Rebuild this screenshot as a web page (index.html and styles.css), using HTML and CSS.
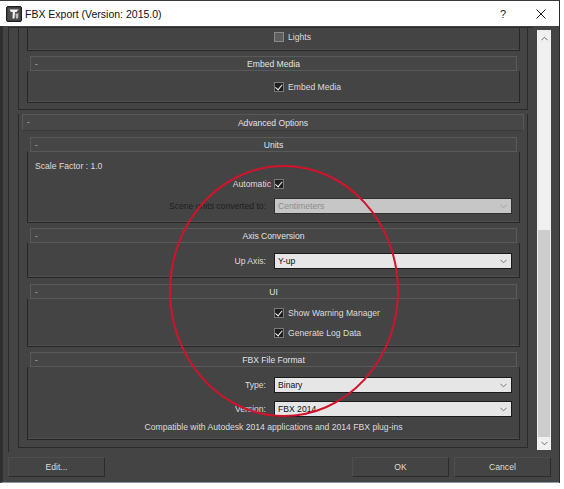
FILE: index.html
```html
<!DOCTYPE html>
<html>
<head>
<meta charset="utf-8">
<title>FBX Export</title>
<link rel="stylesheet" href="styles.css">
</head>
<body>
<div class="window">
  <div class="titlebar">
    <svg class="appicon" viewBox="0 0 16 16">
      <rect x="0.5" y="0.5" width="15" height="15" rx="1.5" fill="#3d3d3d" stroke="#1e1e1e"/>
      <rect x="2" y="2" width="12" height="12" fill="#4d4d4d"/>
      <path d="M3.5 3.5 H12.5 L10.5 6 H9 L8.5 12.5 H6.5 L6.8 6 H5 Z" fill="#f2f2f2"/>
      <path d="M9.5 7.5 L12.5 7.5 L12 12.5 L10 12.5 Z" fill="#bdbdbd"/>
    </svg>
    <span class="title">FBX Export (Version: 2015.0)</span>
    <span class="help">?</span>
    <svg class="close" viewBox="0 0 10 10"><path d="M0.5 0.5 L9.5 9.5 M9.5 0.5 L0.5 9.5" stroke="#1a1a1a" stroke-width="1" fill="none"/></svg>
  </div>
  <div class="client">
    <div class="main">
      <div class="viewport">
        <div class="rollout rollout-partial">
          <div class="sub">
            <div class="sbody lights-body">
              <div class="form">
                <span></span>
                <label class="check"><span class="cb off"></span><span class="ctext">Lights</span></label>
              </div>
            </div>
          </div>
          <div class="sub">
            <div class="shead"><span class="minus">-</span><span class="stitle">Embed Media</span></div>
            <div class="sbody embed-body">
              <div class="form">
                <span></span>
                <label class="check"><span class="cb on"></span><span class="ctext">Embed Media</span></label>
              </div>
            </div>
          </div>
        </div>

        <div class="rollout">
          <div class="rhead"><span class="minus">-</span><span class="stitle">Advanced Options</span></div>
          <div class="rcontent">
            <div class="sub">
              <div class="shead"><span class="minus">-</span><span class="stitle">Units</span></div>
              <div class="sbody units-body">
                <div class="plain">Scale Factor : 1.0</div>
                <div class="form row-auto">
                  <span class="lbl lbl-auto">Automatic</span>
                  <span class="cb on"></span>
                </div>
                <div class="form row-scene">
                  <span class="lbl lbl-dim">Scene units converted to:</span>
                  <div class="select disabled"><span>Centimeters</span><svg class="chev" viewBox="0 0 8 5"><path d="M0.5 0.5 L4 4 L7.5 0.5" fill="none" stroke="#a0a0a0"/></svg></div>
                </div>
              </div>
            </div>

            <div class="sub gap5">
              <div class="shead"><span class="minus">-</span><span class="stitle">Axis Conversion</span></div>
              <div class="sbody axis-body">
                <div class="form">
                  <span class="lbl">Up Axis:</span>
                  <div class="select"><span>Y-up</span><svg class="chev" viewBox="0 0 8 5"><path d="M0.5 0.5 L4 4 L7.5 0.5" fill="none" stroke="#6a6a6a"/></svg></div>
                </div>
              </div>
            </div>

            <div class="sub gap6">
              <div class="shead"><span class="minus">-</span><span class="stitle">UI</span></div>
              <div class="sbody ui-body">
                <div class="form">
                  <span></span>
                  <label class="check"><span class="cb on"></span><span class="ctext">Show Warning Manager</span></label>
                </div>
                <div class="form row-log">
                  <span></span>
                  <label class="check"><span class="cb on"></span><span class="ctext">Generate Log Data</span></label>
                </div>
              </div>
            </div>

            <div class="sub gap5">
              <div class="shead"><span class="minus">-</span><span class="stitle">FBX File Format</span></div>
              <div class="sbody fbx-body">
                <div class="form">
                  <span class="lbl">Type:</span>
                  <div class="select"><span>Binary</span><svg class="chev" viewBox="0 0 8 5"><path d="M0.5 0.5 L4 4 L7.5 0.5" fill="none" stroke="#6a6a6a"/></svg></div>
                </div>
                <div class="form row-version">
                  <span class="lbl">Version:</span>
                  <div class="select"><span>FBX 2014</span><svg class="chev" viewBox="0 0 8 5"><path d="M0.5 0.5 L4 4 L7.5 0.5" fill="none" stroke="#6a6a6a"/></svg></div>
                </div>
                <div class="compat">Compatible with Autodesk 2014 applications and 2014 FBX plug-ins</div>
              </div>
            </div>
          </div>
        </div>
      </div>
      <div class="scrollbar">
        <div class="sb-btn sb-up"><svg viewBox="0 0 8 5"><path d="M0.5 4.5 L4 1 L7.5 4.5" fill="none" stroke="#606060"/></svg></div>
        <div class="sb-space"></div>
        <div class="sb-thumb"></div>
        <div class="sb-btn sb-down"><svg viewBox="0 0 8 5"><path d="M0.5 0.5 L4 4 L7.5 0.5" fill="none" stroke="#606060"/></svg></div>
      </div>
    </div>
    <div class="footer">
      <button class="btn">Edit...</button>
      <span class="spacer"></span>
      <button class="btn">OK</button>
      <button class="btn">Cancel</button>
    </div>
  </div>
</div>
<svg class="annotation" viewBox="0 0 564 489">
  <ellipse cx="284" cy="291" rx="114" ry="125" fill="none" stroke="#d3122c" stroke-width="2"/>
</svg>
</body>
</html>
```

FILE: styles.css
```css
* { box-sizing: border-box; }
html, body { margin: 0; padding: 0; }
body {
  width: 564px;
  height: 489px;
  background: #ffffff;
  font-family: "Liberation Sans", Arial, sans-serif;
  font-size: 8.6px;
  color: #dcdcdc;
  overflow: hidden;
  position: relative;
}
.window {
  width: 560px;
  height: 483px;
  border-top: 1px solid #3a3a3a;
  border-right: 1px solid #2a2a2a;
  display: flex;
  flex-direction: column;
}
.titlebar {
  height: 25px;
  flex: none;
  background: #ffffff;
  display: flex;
  align-items: center;
  padding-left: 6px;
  color: #000;
}
.appicon { width: 16px; height: 16px; flex: none; }
.title { margin-left: 3px; font-size: 10.5px; color: #111; }
.help { margin-left: auto; font-size: 11px; color: #222; margin-right: 30px; }
.close { width: 10px; height: 10px; margin-right: 13px; }

.client {
  flex: 1;
  background: #444444;
  border-left: 3px solid #2f2f2f;
  border-bottom: 1px solid #8c9aa8;
  display: flex;
  flex-direction: column;
}
.main {
  height: 426px;
  flex: none;
  display: flex;
  padding-left: 5px;
}
.viewport {
  width: 525px;
  height: 425px;
  margin-top: 1px;
  border-left: 1px solid #2b2b2b;
  border-top: 1px solid #2b2b2b;
  overflow: hidden;
}
.rollout {
  margin-left: 9px;
  width: 510px;
  border-left: 1px solid #2a2a2a;
  border-right: 1px solid #2a2a2a;
  border-bottom: 1px solid #2a2a2a;
  padding: 0 7px 6px 8px;
  margin-top: 4px;
}
.rollout-partial { margin-top: 0; }
.rollout:not(.rollout-partial) { padding: 0 0 7px 0; }
.rhead {
  height: 17px;
  margin: 0 3px;
  background: #474747;
  border: 1px solid #585858;
  border-bottom-color: #3a3a3a;
  display: flex;
  align-items: center;
  position: relative;
}
.rcontent { padding: 6px 7px 0 8px; }

.sub { width: 493px; }
.gap5 { margin-top: 5px; }
.gap6 { margin-top: 6px; }
.rollout-partial .sub + .sub { margin-top: 5px; }
.shead {
  height: 15px;
  margin: 0 3px;
  background: #464646;
  border: 1px solid #5a5a5a;
  display: flex;
  align-items: center;
  position: relative;
}
.minus {
  position: absolute;
  left: 4px;
  top: 2px;
  color: #cfcfcf;
  font-size: 8px;
}
.stitle { flex: 1; text-align: center; color: #e2e2e2; }
.sbody {
  border-left: 1px solid #262626;
  border-right: 1px solid #262626;
  border-bottom: 1px solid #262626;
  box-shadow: inset 0 -1px 0 #505050;
}
.lights-body { height: 23px; padding-top: 3px; }
.embed-body { height: 32px; padding-top: 10px; }
.units-body { height: 71px; padding-top: 8px; }
.axis-body { height: 35px; padding-top: 10px; }
.ui-body { height: 48px; padding-top: 8px; }
.fbx-body { height: 73px; padding-top: 10px; }

.form {
  display: grid;
  grid-template-columns: 240px 238px;
  column-gap: 6px;
  align-items: center;
}
.plain { height: 12px; line-height: 12px; padding-left: 7px; }
.row-auto { margin-top: 6px; height: 12px; }
.row-scene { margin-top: 8px; }
.row-log { margin-top: 8px; }
.row-version { margin-top: 8px; }
.lbl { text-align: right; padding-right: 2px; color: #dcdcdc; }
.lbl-auto { padding-right: 0; margin-right: -3px; }
.lbl-dim { color: #1e1e1e; }

.check { display: flex; align-items: center; height: 12px; }
.ctext { margin-left: 4px; color: #dcdcdc; }
.cb {
  width: 10px;
  height: 10px;
  background: #1f1f1f;
  border: 1px solid #7a7a7a;
  flex: none;
  position: relative;
}
.cb.off { background: #5e5e5e; border-color: #8a8a8a; }
.cb.on::after {
  content: "";
  position: absolute;
  left: 1.5px;
  top: 0px;
  width: 3px;
  height: 5.5px;
  border-right: 1.6px solid #f4f4f4;
  border-bottom: 1.6px solid #f4f4f4;
  transform: rotate(40deg);
}

.select {
  height: 16px;
  background: #e6e6e6;
  border: 1px solid #1b1b1b;
  display: flex;
  align-items: center;
  padding-left: 3px;
  color: #111;
}
.select span { flex: 1; }
.select .chev { width: 7px; height: 5px; margin-right: 4px; }
.select.disabled { background: #c6c6c6; color: #8e8e8e; border-color: #303030; }
.compat { margin-top: 4px; height: 12px; line-height: 12px; text-align: center; color: #dcdcdc; }

.scrollbar {
  width: 14px;
  height: 420px;
  margin-top: 4px;
  margin-left: 4px;
  display: flex;
  flex-direction: column;
  background: #f0f0f0;
}
.sb-btn { display: flex; align-items: center; justify-content: center; flex: none; }
.sb-btn svg { width: 7px; height: 5px; }
.sb-up { height: 16px; }
.sb-space { height: 184px; }
.sb-thumb { height: 207px; background: #cdcdcd; margin: 0 1px; }
.sb-down { height: 13px; }

.footer {
  height: 30px;
  display: flex;
  padding: 5px 8px 0 5px;
  gap: 5px;
}
.spacer { flex: 1; }
.btn {
  width: 97px;
  height: 20px;
  background: #444444;
  border: 1px solid #2b2b2b;
  border-top-color: #4e4e4e;
  border-left-color: #4e4e4e;
  color: #dedede;
  font-family: "Liberation Sans", Arial, sans-serif;
  font-size: 8.6px;
  padding: 0;
}
.annotation {
  position: absolute;
  left: 0;
  top: 0;
  width: 564px;
  height: 489px;
  pointer-events: none;
}
```
